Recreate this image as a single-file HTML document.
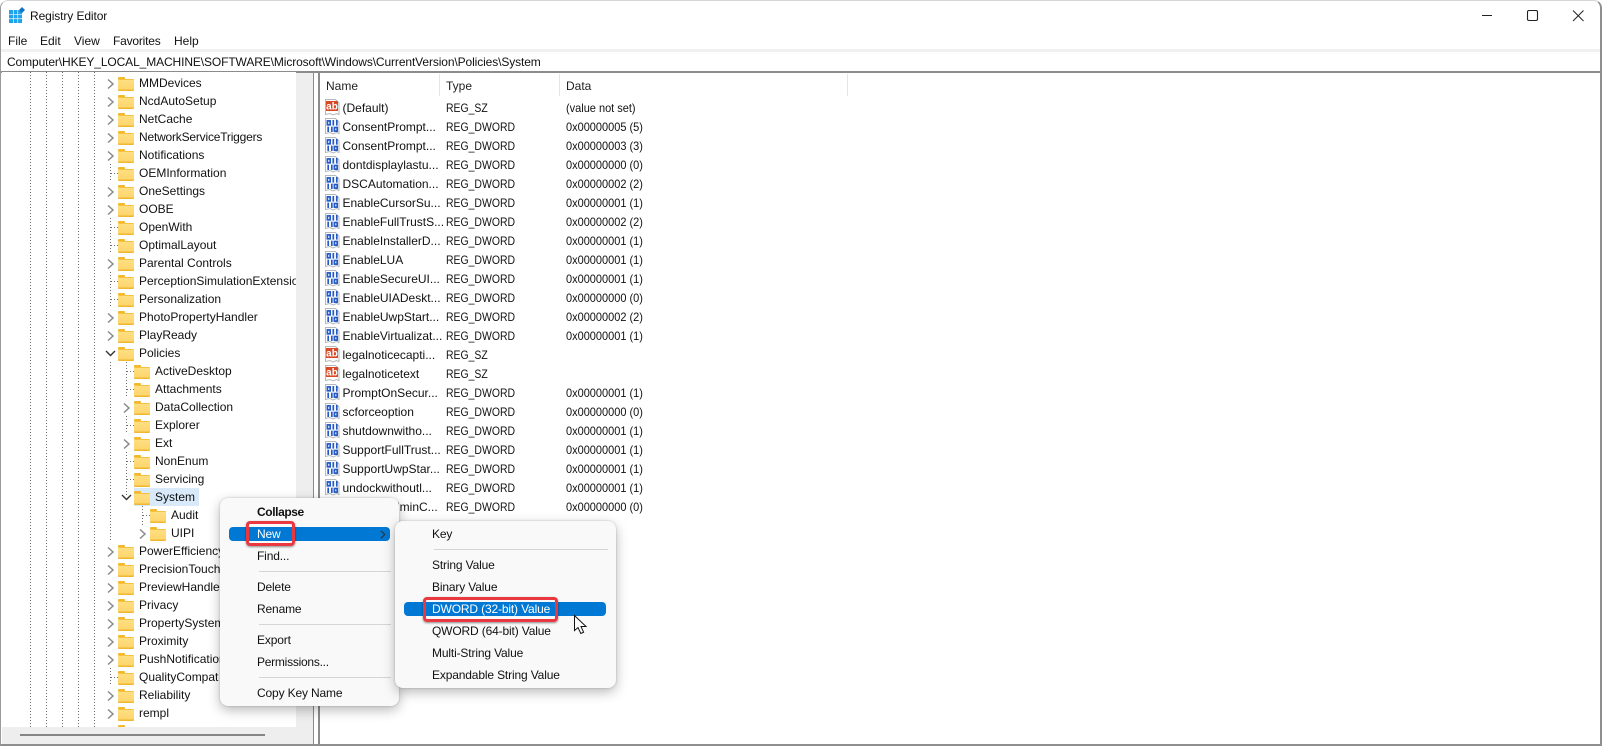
<!DOCTYPE html>
<html><head><meta charset="utf-8"><title>Registry Editor</title>
<style>
html,body{margin:0;padding:0;background:#fff;width:1602px;height:746px;overflow:hidden}
body{font:12px/18px "Liberation Sans",sans-serif;color:#111;position:relative}
.abs,.m,.mi,.h{position:absolute;white-space:nowrap}
#win{position:absolute;left:0;top:0;background:#fff;border:solid #b4b4b4;border-width:1px 2px 2px 1px;border-color:#d6d6d6 #8e8e8e #8e8e8e #9a9a9a;border-radius:8px 8px 0 0;box-sizing:content-box;width:1599px;height:743px}
.m{top:32px;height:18px}
#tree{position:absolute;left:2px;top:72px;width:294px;height:655px;overflow:hidden;background:#fff}
#tree .r{position:relative;height:18px;line-height:18px;white-space:nowrap;left:-2px;width:296px}
.r::before{content:"";position:absolute;top:5px;width:16px;height:12px;background:linear-gradient(#f6c040 0,#f6c040 1px,#ffdf82 1px,#fdd66e 10px,#f0b830 11px);border-radius:1px}
.r::after{content:"";position:absolute;top:3px;width:7px;height:2px;background:#f4b92a;border-radius:1px 1px 0 0}
.a{padding-left:139px}.a::before,.a::after{left:118px}
.b{padding-left:155px}.b::before,.b::after{left:134px}
.c{padding-left:171px}.c::before,.c::after{left:150px}
#sel{position:absolute;left:132px;top:416px;width:65px;height:18px;background:#d8eafa}
#list{position:absolute;left:320px;top:99px}
#list .l{position:relative;height:19px;line-height:19px;white-space:nowrap;width:520px}
#list svg{position:absolute;left:5px;top:0;width:15px;height:17px}
#list span{position:absolute;top:0;transform-origin:0 50%}
.n{left:22.5px}.y{left:126px;transform:scaleX(.87)}.v{left:246px;transform:scaleX(.915)}
.h{top:77px;height:18px;color:#222}
.menu{position:absolute;background:#f9f9f9;border-radius:8px;box-shadow:0 4px 12px rgba(0,0,0,.28),0 0 2px rgba(0,0,0,.2)}
.mi{height:18px;line-height:18px;color:#111;letter-spacing:-.15px}
.sep{position:absolute;height:1px;background:#d5d5d5}
.hl{position:absolute;background:#0078d4;border-radius:4px}
.red{position:absolute;box-sizing:border-box;border:3px solid #e9383f;border-radius:4px;box-shadow:0 1px 2px rgba(0,0,0,.45)}
</style></head><body>
<svg width="0" height="0" style="position:absolute">
<symbol id="d" viewBox="0 0 15 17"><path d="M.5.5H10.5L14 4V15.5L11.5 14.5 8 16 5 14.5 .5 15.5Z" fill="#fff" stroke="#b4b7bb"/><g fill="none" stroke="#2459c6" stroke-width="1.7"><rect x="2.4" y="2.9" width="2.8" height="3.9"/><path d="M8.3 2V7.6M11.8 2V7.6M3.2 8.6V14M6.8 8.6V14"/><rect x="9.4" y="9.5" width="2.8" height="3.6"/></g></symbol>
<symbol id="s" viewBox="0 0 15 17"><path d="M.5.5H10.5L14 4V15.5L11.5 14.5 8 16 5 14.5 .5 15.5Z" fill="#fff" stroke="#b4b7bb"/><rect x="1" y="2" width="12" height="10" fill="#d84a26"/><text x="7" y="10.4" font-family="Liberation Sans" font-size="10" font-weight="700" fill="#fff" text-anchor="middle">ab</text></symbol>
</svg>
<div id="win"></div>

<svg class="abs" style="left:9px;top:7px" width="17" height="17" viewBox="0 0 17 17"><rect x="0" y="3" width="13" height="13" fill="#1fa3ea"/><path d="M4.5 3V16M8.7 3V16M0 7.4H13M0 11.7H13" stroke="#cfeaf9" stroke-width=".8"/><path d="M13 0l3 3-3 3-3-3z" fill="#1474c4"/></svg>
<div class="abs" style="left:30px;top:7px;letter-spacing:-.1px">Registry Editor</div>
<svg class="abs" style="left:1480px;top:8px" width="106" height="14" viewBox="0 0 106 14" fill="none" stroke="#222"><path d="M2 7.5H12"/><rect x="47.5" y="2.5" width="10" height="10" rx="1.5" stroke-width="1.1"/><path d="M93 2.5L103.5 13M103.5 2.5L93 13"/></svg>

<div class="m" style="left:8px">File</div>
<div class="m" style="left:40px">Edit</div>
<div class="m" style="left:74px">View</div>
<div class="m" style="left:113px;letter-spacing:-.2px">Favorites</div>
<div class="m" style="left:174px">Help</div>

<div class="abs" style="left:1px;top:49px;width:1599px;height:3px;background:#f0f0f0"></div>
<div class="abs" style="left:1px;top:71px;width:1599px;height:2px;background:#8b8b8b"></div>
<div class="abs" style="left:7px;top:53px;letter-spacing:-.11px">Computer\HKEY_LOCAL_MACHINE\SOFTWARE\Microsoft\Windows\CurrentVersion\Policies\System</div>

<div class="abs" style="left:296px;top:73px;width:17px;height:671px;background:#eee"></div>
<div class="abs" style="left:2px;top:727px;width:311px;height:17px;background:#eee"></div>
<div class="abs" style="left:20px;top:734px;width:245px;height:2px;background:#858585"></div>
<div class="abs" style="left:313px;top:73px;width:1px;height:671px;background:#8b8b8b"></div>
<div class="abs" style="left:314px;top:73px;width:4px;height:671px;background:#fff"></div>
<div class="abs" style="left:318px;top:73px;width:2px;height:671px;background:#8b8b8b"></div>

<div id="tree">
<div id="sel"></div>
<svg class="abs" style="left:-2px;top:0" width="296" height="655" viewBox="0 72 296 655" fill="none">
<g stroke="#6e6e6e" stroke-dasharray="1 2">
<path d="M30.5 72V727M46.5 72V727M62.5 72V727M78.5 72V727M94.5 72V727"/>
<path d="M110.5 164V182M110.5 218V254M110.5 272V308M110.5 362V542M110.5 668V686"/>
<path d="M126.5 362V398M126.5 416V434M126.5 452V497M142.5 506V525"/>
<path d="M111 173.5H118M111 227.5H118M111 245.5H118M111 281.5H118M111 299.5H118M127 371.5H134M127 389.5H134M127 425.5H134M127 461.5H134M127 479.5H134M143 515.5H150M111 677.5H118"/>
</g>
<g stroke="#8a8a8a" stroke-width="1.5">
<path d="M108 79.5l5 4.5-5 4.5M108 97.5l5 4.5-5 4.5M108 115.5l5 4.5-5 4.5M108 133.5l5 4.5-5 4.5M108 151.5l5 4.5-5 4.5"/>
<path d="M108 187.5l5 4.5-5 4.5M108 205.5l5 4.5-5 4.5M108 259.5l5 4.5-5 4.5M108 313.5l5 4.5-5 4.5M108 331.5l5 4.5-5 4.5"/>
<path d="M124 403.5l5 4.5-5 4.5M124 439.5l5 4.5-5 4.5M140 529.5l5 4.5-5 4.5"/>
<path d="M108 547.5l5 4.5-5 4.5M108 565.5l5 4.5-5 4.5M108 583.5l5 4.5-5 4.5M108 601.5l5 4.5-5 4.5M108 619.5l5 4.5-5 4.5M108 637.5l5 4.5-5 4.5M108 655.5l5 4.5-5 4.5M108 691.5l5 4.5-5 4.5M108 709.5l5 4.5-5 4.5"/>
</g>
<g stroke="#333" stroke-width="1.4"><path d="M106 351l4.5 4.5 4.5-4.5M122 495l4.5 4.5 4.5-4.5"/></g>
</svg>
<div style="position:absolute;left:0;top:2px;width:296px">
<div class="r a">MMDevices</div>
<div class="r a">NcdAutoSetup</div>
<div class="r a">NetCache</div>
<div class="r a" style="letter-spacing:-.2px">NetworkServiceTriggers</div>
<div class="r a">Notifications</div>
<div class="r a">OEMInformation</div>
<div class="r a">OneSettings</div>
<div class="r a">OOBE</div>
<div class="r a">OpenWith</div>
<div class="r a">OptimalLayout</div>
<div class="r a">Parental Controls</div>
<div class="r a">PerceptionSimulationExtensions</div>
<div class="r a">Personalization</div>
<div class="r a">PhotoPropertyHandler</div>
<div class="r a">PlayReady</div>
<div class="r a">Policies</div>
<div class="r b">ActiveDesktop</div>
<div class="r b">Attachments</div>
<div class="r b">DataCollection</div>
<div class="r b">Explorer</div>
<div class="r b">Ext</div>
<div class="r b">NonEnum</div>
<div class="r b">Servicing</div>
<div class="r b">System</div>
<div class="r c">Audit</div>
<div class="r c">UIPI</div>
<div class="r a">PowerEfficiencyDiagnostics</div>
<div class="r a">PrecisionTouchPad</div>
<div class="r a">PreviewHandlers</div>
<div class="r a">Privacy</div>
<div class="r a">PropertySystem</div>
<div class="r a">Proximity</div>
<div class="r a">PushNotifications</div>
<div class="r a">QualityCompat</div>
<div class="r a">Reliability</div>
<div class="r a">rempl</div>
<div class="r a"></div>
</div>
</div>

<div class="h" style="left:326px">Name</div>
<div class="h" style="left:446px">Type</div>
<div class="h" style="left:566px">Data</div>
<div class="abs" style="left:439px;top:74px;width:1px;height:22px;background:#e5e5e5"></div>
<div class="abs" style="left:559px;top:74px;width:1px;height:22px;background:#e5e5e5"></div>
<div class="abs" style="left:847px;top:74px;width:1px;height:22px;background:#e5e5e5"></div>

<div id="list">
<div class="l"><svg><use href="#s"/></svg><span class="n">(Default)</span><span class="y">REG_SZ</span><span class="v">(value not set)</span></div>
<div class="l"><svg><use href="#d"/></svg><span class="n">ConsentPrompt...</span><span class="y">REG_DWORD</span><span class="v">0x00000005 (5)</span></div>
<div class="l"><svg><use href="#d"/></svg><span class="n">ConsentPrompt...</span><span class="y">REG_DWORD</span><span class="v">0x00000003 (3)</span></div>
<div class="l"><svg><use href="#d"/></svg><span class="n">dontdisplaylastu...</span><span class="y">REG_DWORD</span><span class="v">0x00000000 (0)</span></div>
<div class="l"><svg><use href="#d"/></svg><span class="n">DSCAutomation...</span><span class="y">REG_DWORD</span><span class="v">0x00000002 (2)</span></div>
<div class="l"><svg><use href="#d"/></svg><span class="n">EnableCursorSu...</span><span class="y">REG_DWORD</span><span class="v">0x00000001 (1)</span></div>
<div class="l"><svg><use href="#d"/></svg><span class="n">EnableFullTrustS...</span><span class="y">REG_DWORD</span><span class="v">0x00000002 (2)</span></div>
<div class="l"><svg><use href="#d"/></svg><span class="n">EnableInstallerD...</span><span class="y">REG_DWORD</span><span class="v">0x00000001 (1)</span></div>
<div class="l"><svg><use href="#d"/></svg><span class="n">EnableLUA</span><span class="y">REG_DWORD</span><span class="v">0x00000001 (1)</span></div>
<div class="l"><svg><use href="#d"/></svg><span class="n">EnableSecureUI...</span><span class="y">REG_DWORD</span><span class="v">0x00000001 (1)</span></div>
<div class="l"><svg><use href="#d"/></svg><span class="n">EnableUIADeskt...</span><span class="y">REG_DWORD</span><span class="v">0x00000000 (0)</span></div>
<div class="l"><svg><use href="#d"/></svg><span class="n">EnableUwpStart...</span><span class="y">REG_DWORD</span><span class="v">0x00000002 (2)</span></div>
<div class="l"><svg><use href="#d"/></svg><span class="n">EnableVirtualizat...</span><span class="y">REG_DWORD</span><span class="v">0x00000001 (1)</span></div>
<div class="l"><svg><use href="#s"/></svg><span class="n">legalnoticecapti...</span><span class="y">REG_SZ</span></div>
<div class="l"><svg><use href="#s"/></svg><span class="n">legalnoticetext</span><span class="y">REG_SZ</span></div>
<div class="l"><svg><use href="#d"/></svg><span class="n">PromptOnSecur...</span><span class="y">REG_DWORD</span><span class="v">0x00000001 (1)</span></div>
<div class="l"><svg><use href="#d"/></svg><span class="n">scforceoption</span><span class="y">REG_DWORD</span><span class="v">0x00000000 (0)</span></div>
<div class="l"><svg><use href="#d"/></svg><span class="n">shutdownwitho...</span><span class="y">REG_DWORD</span><span class="v">0x00000001 (1)</span></div>
<div class="l"><svg><use href="#d"/></svg><span class="n">SupportFullTrust...</span><span class="y">REG_DWORD</span><span class="v">0x00000001 (1)</span></div>
<div class="l"><svg><use href="#d"/></svg><span class="n">SupportUwpStar...</span><span class="y">REG_DWORD</span><span class="v">0x00000001 (1)</span></div>
<div class="l"><svg><use href="#d"/></svg><span class="n">undockwithoutl...</span><span class="y">REG_DWORD</span><span class="v">0x00000001 (1)</span></div>
<div class="l"><svg><use href="#d"/></svg><span class="n">ValidateAdminC...</span><span class="y">REG_DWORD</span><span class="v">0x00000000 (0)</span></div>
</div>

<div class="menu" style="left:220px;top:498px;width:179px;height:208px"></div>
<div class="hl" style="left:229px;top:527px;width:161px;height:14px"></div>
<div class="mi" style="left:257px;top:503px;font-weight:700;letter-spacing:-.4px">Collapse</div>
<div class="mi" style="left:257px;top:525px;color:#fff">New</div>
<svg class="abs" style="left:380px;top:530px" width="6" height="9" viewBox="0 0 6 9" fill="none" stroke="#333" stroke-width="1.2"><path d="M1 .8L4.7 4.5 1 8.2"/></svg>
<div class="mi" style="left:257px;top:547px">Find...</div>
<div class="sep" style="left:259px;top:571px;width:132px"></div>
<div class="mi" style="left:257px;top:578px">Delete</div>
<div class="mi" style="left:257px;top:600px">Rename</div>
<div class="sep" style="left:259px;top:624px;width:132px"></div>
<div class="mi" style="left:257px;top:631px">Export</div>
<div class="mi" style="left:257px;top:653px;letter-spacing:-.25px">Permissions...</div>
<div class="sep" style="left:259px;top:677px;width:132px"></div>
<div class="mi" style="left:257px;top:684px">Copy Key Name</div>
<div class="red" style="left:246px;top:521px;width:49px;height:25px"></div>

<div class="menu" style="left:395px;top:521px;width:221px;height:167px"></div>
<div class="hl" style="left:404px;top:602px;width:202px;height:14px"></div>
<div class="mi" style="left:432px;top:525px">Key</div>
<div class="sep" style="left:434px;top:549px;width:174px"></div>
<div class="mi" style="left:432px;top:556px">String Value</div>
<div class="mi" style="left:432px;top:578px">Binary Value</div>
<div class="mi" style="left:432px;top:600px;color:#fff">DWORD (32-bit) Value</div>
<div class="mi" style="left:432px;top:622px">QWORD (64-bit) Value</div>
<div class="mi" style="left:432px;top:644px">Multi-String Value</div>
<div class="mi" style="left:432px;top:666px">Expandable String Value</div>
<div class="red" style="left:423px;top:597px;width:135px;height:25px"></div>

<svg class="abs" style="left:572px;top:613px" width="18" height="24" viewBox="0 0 18 24"><path d="M2.5 2.5V17.5L6 14.5 8.8 20.5 11.6 19.2 9 13.5H14Z" fill="#fff" stroke="#111" stroke-width="1"/></svg>
</body></html>
